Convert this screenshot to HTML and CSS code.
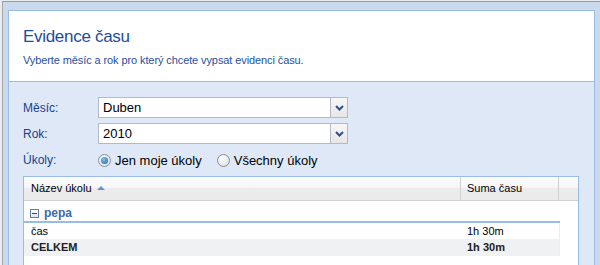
FILE: index.html
```html
<!DOCTYPE html>
<html lang="cs">
<head>
  <meta charset="UTF-8">
  <title>Evidence času</title>
  <link rel="stylesheet" href="styles.css">
</head>
<body>
  <div class="frame">
    <div class="panel">
      <!-- Hlavička -->
      <div class="panel-head">
        <h1 class="title">Evidence času</h1>
        <p class="subtitle">Vyberte měsíc a rok pro který chcete vypsat evidenci času.</p>
      </div>

      <!-- Formulář -->
      <div class="panel-body">
        <div class="form-row">
          <label class="form-label">Měsíc:</label>
          <div class="combo">
            <span class="combo-text">Duben</span>
            <span class="combo-trigger">
              <svg width="9" height="6" viewBox="0 0 9 6"><path d="M1 1 L4.5 4.5 L8 1" fill="none" stroke="#2f4f8c" stroke-width="2"/></svg>
            </span>
          </div>
        </div>
        <div class="form-row">
          <label class="form-label">Rok:</label>
          <div class="combo">
            <span class="combo-text">2010</span>
            <span class="combo-trigger">
              <svg width="9" height="6" viewBox="0 0 9 6"><path d="M1 1 L4.5 4.5 L8 1" fill="none" stroke="#2f4f8c" stroke-width="2"/></svg>
            </span>
          </div>
        </div>
        <div class="form-row radios">
          <label class="form-label">Úkoly:</label>
          <span class="radio checked"></span><span class="radio-text">Jen moje úkoly</span>
          <span class="radio"></span><span class="radio-text">Všechny úkoly</span>
        </div>

        <!-- Tabulka -->
        <div class="grid">
          <div class="grid-head">
            <div class="col-name">Název úkolu <span class="sort-up"></span></div>
            <div class="col-sum">Suma času</div>
            <div class="col-pad"></div>
          </div>
          <div class="grid-body">
            <div class="group">
              <span class="minus"></span>
              <span class="group-name">pepa</span>
            </div>
            <div class="row">
              <div class="col-name">čas</div>
              <div class="col-sum">1h 30m</div>
            </div>
            <div class="row total">
              <div class="col-name">CELKEM</div>
              <div class="col-sum">1h 30m</div>
            </div>
          </div>
        </div>
      </div>
    </div>
  </div>
</body>
</html>
```

FILE: styles.css
```css
/* Základ */
body {
  margin: 0;
  background: #e8ecf2;
  font-family: "Liberation Sans", Arial, sans-serif;
  overflow: hidden;
}

.frame {
  margin: 1px 0 0 2px;
  height: 300px;
  padding: 8px 5px 0 5px;
  border-top: 1px solid #9a9a9a;
  border-left: 1px solid #a8a8a8;
  background: #cbd9ec;
}

.panel {
  border: 1px solid #99bbe8;
  background: #dfe8f6;
}

/* Hlavička */
.panel-head {
  height: 70px;
  padding: 0 14px;
  background: #fff;
  border-bottom: 1px solid #99bbe8;
}

.title {
  margin: 0;
  padding-top: 15px;
  font-size: 17px;
  letter-spacing: -0.3px;
  font-weight: normal;
  color: #1e4d9a;
  line-height: 21px;
}

.subtitle {
  margin: 7px 0 0;
  font-size: 11px;
  letter-spacing: -0.1px;
  color: #1f4f9e;
}

/* Formulář */
.panel-body {
  padding: 15px 15px 0 14px;
}

.form-row {
  display: flex;
  align-items: center;
  height: 21px;
  margin-bottom: 5px;
}

.form-label {
  width: 75px;
  font-size: 12px;
  color: #15428b;
}

.combo {
  display: flex;
  width: 248px;
  height: 19px;
  border: 1px solid #b5b8c8;
  background: #fff;
}

.combo-text {
  flex: 1;
  padding-left: 4px;
  font-size: 13px;
  line-height: 19px;
  color: #000;
}

.combo-trigger {
  width: 16px;
  display: flex;
  align-items: center;
  justify-content: center;
  border-left: 1px solid #b5b8c8;
  background: linear-gradient(#f7f7f7, #e6e6e6);
}

.radios {
  height: 22px;
  margin-top: 5px;
}

.radio {
  width: 11px;
  height: 11px;
  border: 1px solid #8a8f9c;
  border-radius: 50%;
  background: radial-gradient(circle at 40% 35%, #fff, #d5d8de);
  position: relative;
}

.radio.checked::after {
  content: "";
  position: absolute;
  left: 2px;
  top: 2px;
  width: 7px;
  height: 7px;
  border-radius: 50%;
  background: radial-gradient(circle at 40% 35%, #7fc3f3, #1a5ea8);
}

.radio-text {
  font-size: 13px;
  margin: 0 15px 0 4px;
}

/* Tabulka */
.grid {
  width: 554px;
  height: 120px;
  margin-top: 5px;
  border: 1px solid #99bbe8;
  background: #fff;
}

.grid-head {
  display: flex;
  height: 23px;
  border-bottom: 1px solid #d0d0d0;
  background: linear-gradient(#fbfbfb 0, #f7f7f7 45%, #ececec 50%, #ebebeb 100%);
  font-size: 11px;
  line-height: 23px;
  color: #000;
}

.grid-head .col-name {
  width: 429px;
  padding-left: 7px;
  border-right: 1px solid #d0d0d0;
}

.grid-head .col-sum {
  width: 91px;
  padding-left: 6px;
  border-right: 1px solid #d0d0d0;
}

.grid-head .col-pad {
  flex: 1;
}

.sort-up {
  display: inline-block;
  margin-left: 2px;
  width: 0;
  height: 0;
  border-left: 4px solid transparent;
  border-right: 4px solid transparent;
  border-bottom: 4px solid #6b8fc8;
  vertical-align: 2px;
}

.grid-body {
  width: 536px;
  font-size: 11px;
}

.group {
  display: flex;
  align-items: center;
  height: 20px;
  padding-left: 6px;
  border-bottom: 2px solid #99bbe8;
}

.minus {
  width: 7px;
  height: 7px;
  margin-top: 4px;
  border: 1px solid #6a7f9f;
  background: linear-gradient(#fff, #dde4ee);
  position: relative;
}

.minus::after {
  content: "";
  position: absolute;
  left: 1px;
  top: 3px;
  width: 5px;
  height: 1px;
  background: #2b4a7a;
}

.group-name {
  margin: 4px 0 0 5px;
  font-size: 12px;
  font-weight: bold;
  color: #3a69ad;
}

.row {
  display: flex;
  height: 16px;
  line-height: 16px;
  border-right: 1px solid #ededed;
}

.row .col-name {
  width: 429px;
  padding-left: 7px;
}

.row .col-sum {
  padding-left: 7px;
}

.row.total {
  height: 17px;
  line-height: 17px;
  background: #f0f1f3;
  font-weight: bold;
  color: #222;
}
```
